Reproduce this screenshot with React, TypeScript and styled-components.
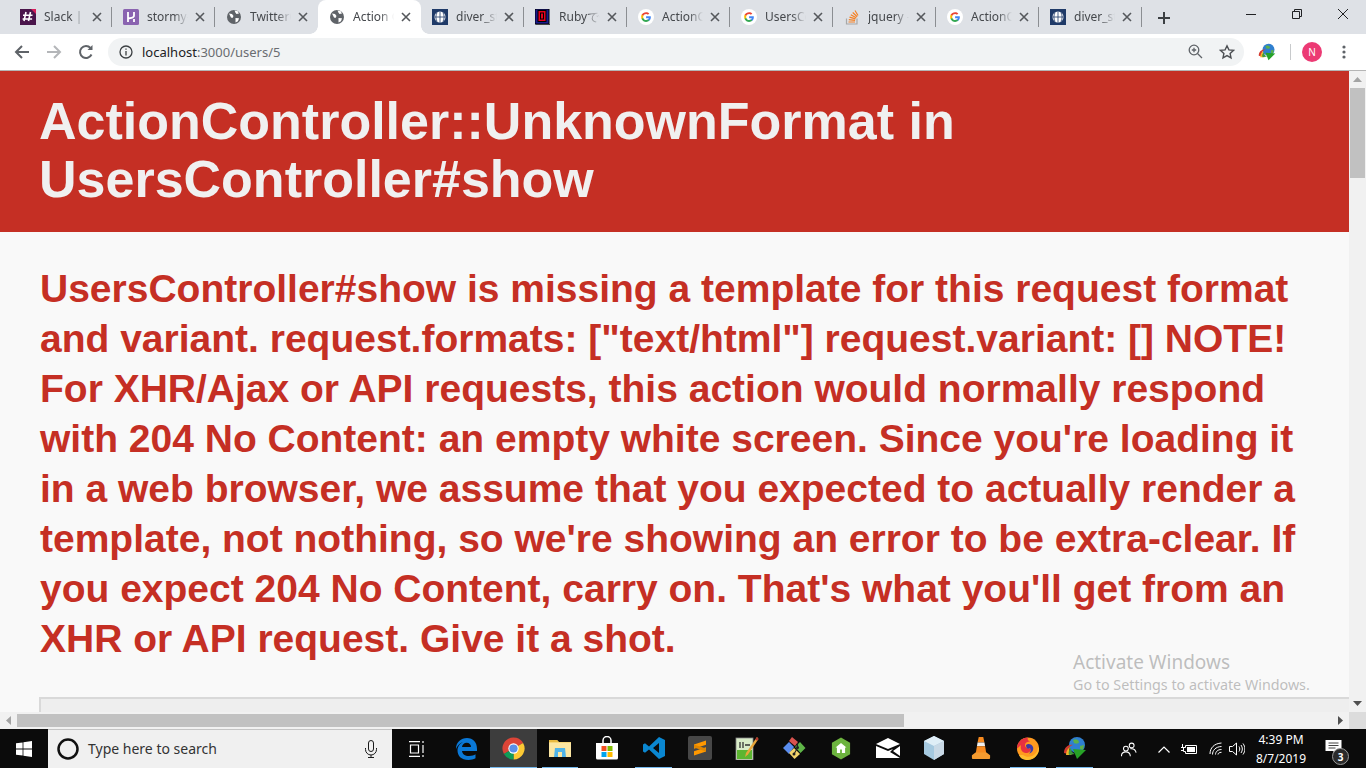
import React from "react";
import styled, { createGlobalStyle } from "styled-components";

const GlobalStyle = createGlobalStyle`
  html, body {
    margin: 0;
    padding: 0;
    width: 1366px;
    height: 768px;
    overflow: hidden;
    background: #fff;
  }
  * { box-sizing: border-box; }
`;

const UI_FONT = `"Noto Sans", "Open Sans", "Liberation Sans", sans-serif`;

const Screen = styled.div`
  position: relative;
  display: flex;
  flex-direction: column;
  width: 1366px;
  height: 768px;
  font-family: "Liberation Sans", Arial, sans-serif;
`;

/* ---- browser chrome ---- */

const TabStrip = styled.div`
  display: flex;
  align-items: flex-end;
  height: 34px;
  padding-left: 9px;
  background: #dee1e6;
  flex: none;
`;

const Tab = styled.div<{ $active?: boolean; $sep?: boolean }>`
  position: relative;
  display: flex;
  align-items: center;
  width: 103px;
  height: 34px;
  padding-left: 11px;
  flex: none;
  background: ${(p) => (p.$active ? "#fff" : "transparent")};
  border-radius: 8px 8px 0 0;

  ${(p) =>
    p.$sep &&
    `&::after {
      content: "";
      position: absolute;
      right: 0;
      top: 7px;
      width: 1px;
      height: 20px;
      background: #8b8e92;
    }`}

  ${(p) =>
    p.$active &&
    `&::before {
      content: "";
      position: absolute;
      left: -8px;
      right: -8px;
      bottom: 0;
      height: 8px;
      background:
        radial-gradient(circle at 0 0, #dee1e6 7.5px, #fff 8px) left bottom / 8px 8px no-repeat,
        radial-gradient(circle at 100% 0, #dee1e6 7.5px, #fff 8px) right bottom / 8px 8px no-repeat;
    }`}
`;

const Favicon = styled.span`
  display: flex;
  width: 16px;
  height: 16px;
  flex: none;
`;

const TabTitle = styled.span`
  width: 41px;
  margin-left: 8px;
  font: 12px/16px ${UI_FONT};
  color: #45484c;
  white-space: nowrap;
  overflow: hidden;
  -webkit-mask-image: linear-gradient(90deg, #000 65%, transparent 100%);
  mask-image: linear-gradient(90deg, #000 65%, transparent 100%);
`;

const TabClose = styled.span`
  display: flex;
  margin-left: 7px;
  color: #55585c;
`;

const NewTab = styled.span`
  display: flex;
  margin: 0 0 9px 15px;
  align-self: flex-end;
  color: #3c4043;
`;

const WindowControls = styled.div`
  display: flex;
  margin-left: auto;
  align-self: flex-start;
  color: #202124;
`;

const WindowButton = styled.span`
  display: flex;
  align-items: center;
  justify-content: center;
  width: 46px;
  height: 28px;
`;

const Toolbar = styled.div`
  display: flex;
  align-items: center;
  height: 37px;
  padding: 0 0 1px 6px;
  background: #fff;
  border-bottom: 1px solid #b5b5b5;
  flex: none;
`;

const NavButton = styled.span<{ $muted?: boolean }>`
  display: flex;
  justify-content: center;
  width: 32px;
  color: ${(p) => (p.$muted ? "#b4b6b9" : "#5f6368")};
`;

const AddressBar = styled.div`
  display: flex;
  align-items: center;
  width: 1136px;
  height: 28px;
  margin-left: 6px;
  padding: 0 9px 0 11px;
  background: #f1f3f4;
  border-radius: 14px;
  color: #5f6368;
`;

const Url = styled.span`
  margin-left: 9px;
  font: 13px/18px ${UI_FONT};
  color: #6a6d71;
`;

const UrlHost = styled.span`
  color: #202124;
`;

const AddressActions = styled.div`
  display: flex;
  align-items: center;
  gap: 16px;
  margin-left: auto;
`;

const ExtensionSlot = styled.span`
  display: flex;
  margin-left: 14px;
`;

const ToolbarDivider = styled.span`
  width: 1px;
  height: 16px;
  margin: 0 11px 0 14px;
  background: #c8cacc;
`;

const Avatar = styled.span`
  display: flex;
  align-items: center;
  justify-content: center;
  width: 20px;
  height: 20px;
  border-radius: 50%;
  background: #ec3a74;
  color: #fff;
  font: 10px/1 ${UI_FONT};
`;

const MenuDots = styled.span`
  display: flex;
  margin-left: 20px;
  color: #5f6368;
`;

/* ---- page ---- */

const PageRow = styled.div`
  display: flex;
  height: 641px;
  flex: none;
`;

const Page = styled.main`
  width: 1349px;
  overflow: hidden;
  background: #f9f9f9;
`;

const ErrorHeader = styled.header`
  padding: 21px 39px 24px;
  background: #c52f24;
`;

const ErrorTitle = styled.h1`
  margin: 0;
  font-size: 52px;
  line-height: 58px;
  font-weight: 700;
  color: #f0f0f0;
`;

const ErrorMessage = styled.h2`
  margin: 32px 0 33px;
  padding: 0 39px 0 40px;
  font-size: 39px;
  line-height: 50px;
  font-weight: 700;
  color: #c52f24;
`;

const TraceBox = styled.div`
  height: 60px;
  margin-left: 39px;
  background: #eeeeee;
  border-top: 2px solid #d9d9d9;
  border-left: 2px solid #d9d9d9;
`;

const VerticalBar = styled.div`
  display: flex;
  flex-direction: column;
  align-items: center;
  width: 17px;
  background: #f1f1f1;
`;

const ArrowCell = styled.span`
  display: flex;
  align-items: center;
  justify-content: center;
  width: 17px;
  height: 17px;
  flex: none;
  color: #505050;
`;

const VerticalThumb = styled.div`
  width: 15px;
  height: 90px;
  background: #c1c1c1;
`;

const VerticalSpacer = styled.div`
  flex: 1;
`;

const HorizontalBar = styled.div`
  display: flex;
  align-items: center;
  height: 17px;
  background: #f1f1f1;
  flex: none;
`;

const HorizontalThumb = styled.div`
  width: 887px;
  height: 13px;
  background: #c1c1c1;
`;

const HorizontalTrack = styled.div`
  flex: 1;
`;

const ScrollCorner = styled.div`
  width: 17px;
  height: 17px;
  background: #dcdcdc;
`;

const Watermark = styled.div`
  position: absolute;
  left: 1073px;
  top: 650px;
  font-family: ${UI_FONT};
  color: rgba(130, 130, 130, 0.5);
  pointer-events: none;
`;

const WatermarkTitle = styled.div`
  font-size: 19px;
  line-height: 24px;
`;

const WatermarkText = styled.div`
  font-size: 14.3px;
  line-height: 22px;
`;

/* ---- taskbar ---- */

const Taskbar = styled.footer`
  display: flex;
  align-items: center;
  height: 40px;
  background: #0b0b0b;
  flex: none;
  color: #fff;
`;

const StartButton = styled.span`
  display: flex;
  align-items: center;
  justify-content: center;
  width: 48px;
  height: 40px;
`;

const SearchBox = styled.div`
  display: flex;
  align-items: center;
  width: 344px;
  height: 40px;
  padding: 0 15px 2px 9px;
  background: #f0f0f0;
  border-top: 1px solid #c4c4c4;
  color: #1a1a1a;
`;

const SearchText = styled.span`
  margin-left: 9px;
  font: 14px/20px ${UI_FONT};
  color: #333;
`;

const SearchMic = styled.span`
  display: flex;
  margin-left: auto;
`;

const TaskViewButton = styled.span`
  display: flex;
  align-items: center;
  justify-content: center;
  width: 51px;
  height: 40px;
  padding: 0 2px 1px 0;
`;

const AppButton = styled.span<{ $open?: boolean; $focused?: boolean }>`
  position: relative;
  display: flex;
  align-items: center;
  justify-content: center;
  width: 46.8px;
  height: 40px;
  padding-bottom: 2px;
  flex: none;
  background: ${(p) => (p.$focused ? "#3d3d3d" : "transparent")};

  ${(p) =>
    p.$open &&
    `&::after {
      content: "";
      position: absolute;
      left: ${p.$focused ? "0" : "5px"};
      right: ${p.$focused ? "0" : "5px"};
      bottom: 0;
      height: 2px;
      background: #76b9ed;
    }`}
`;

const Tray = styled.div`
  display: flex;
  align-items: center;
  margin-left: auto;
  height: 40px;
  padding-right: 11px;
`;

const TrayIcon = styled.span<{ $w: number; $gap?: number }>`
  display: flex;
  align-items: center;
  justify-content: center;
  width: ${(p) => p.$w}px;
  margin-left: ${(p) => p.$gap ?? 0}px;
  color: #fff;
`;

const Clock = styled.div`
  width: 60px;
  margin-left: 6px;
  text-align: center;
  font: 12px/19px ${UI_FONT};
  color: #fff;
`;

const NotifyButton = styled.span`
  position: relative;
  display: flex;
  align-items: center;
  justify-content: center;
  width: 44px;
  height: 40px;
  padding-bottom: 4px;
`;

const NotifyBadge = styled.span`
  position: absolute;
  left: 21px;
  top: 19px;
  display: flex;
  align-items: center;
  justify-content: center;
  width: 17px;
  height: 17px;
  border-radius: 50%;
  background: #2b2b2b;
  border: 1px solid #9a9a9a;
  font: 700 10px/1 ${UI_FONT};
  color: #fff;
`;

/* ---- icons ---- */

const Svg = ({ s = 16, h, children }: { s?: number; h?: number; children: React.ReactNode }) => (
  <svg width={s} height={h ?? s} viewBox={`0 0 ${s} ${h ?? s}`} fill="none">
    {children}
  </svg>
);

const SlackIcon = () => (
  <Svg>
    <rect width="16" height="16" fill="#4a154b" />
    <path d="M11 0h5v5z" fill="#d81e5b" />
    <path d="M6 3l-2 9M10.5 3l-2 9M3 6.2h9.5M2.6 10h9.5" stroke="#fff" strokeWidth="1.6" />
  </Svg>
);

const HerokuIcon = () => (
  <Svg>
    <rect width="16" height="16" rx="1.5" fill="#8a63b0" />
    <path d="M5 3v10M11 3v3.5c0 1.5-1 2-2.5 2.3L5 9.5M11 10v3" stroke="#fff" strokeWidth="1.8" />
  </Svg>
);

const GlobeIcon = () => (
  <Svg>
    <circle cx="8" cy="8" r="7" fill="#5f6368" />
    <path d="M3 4.5l3 .5 1.5 2-1 2L5 8.5zM8.5 1.5l3 .5 1.5 2.5-2.5.5-1-1.2zM9.5 9l3.5.3-1 3-2.5 1.2z" fill="#fff" />
  </Svg>
);

const DiverIcon = () => (
  <Svg>
    <rect width="16" height="16" fill="#1f3a68" />
    <circle cx="8" cy="8" r="5.5" fill="#fff" />
    <path d="M2.5 8h11M8 2.5v11M5 3.5c-1.500 3-1.500 6 0 9M11 3.500c1.500 3 1.500 6 0 9" stroke="#1f3a68" strokeWidth=".8" />
  </Svg>
);

const RubyIcon = () => (
  <Svg>
    <rect width="14" height="15" fill="#1a1a8c" stroke="#000" />
    <rect x="3" y="1.500" width="8" height="11" fill="#e8001c" stroke="#000" />
    <rect x="5.500" y="4" width="3" height="6" fill="#e8001c" stroke="#000" />
    <path d="M1 15.500h14" stroke="#444" />
  </Svg>
);

const GoogleIcon = () => (
  <svg width="16" height="16" viewBox="0 0 48 48">
    <circle cx="24" cy="24" r="24" fill="#fff" />
    <path d="M38.500 24.800c0-1-.1-2-.3-2.900H24.300v5.500h8c-.3 1.800-1.400 3.400-3 4.400v3.700h4.800c2.800-2.600 4.400-6.400 4.400-10.700z" fill="#4285f4" />
    <path d="M24.300 39c4 0 7.300-1.300 9.800-3.500l-4.800-3.700c-1.300.9-3 1.400-5 1.400-3.900 0-7.200-2.600-8.300-6.100h-4.900v3.800C13.500 35.800 18.500 39 24.300 39z" fill="#34a853" />
    <path d="M16 26.100c-.6-1.800-.6-3.700 0-5.500v-3.800h-4.900c-2.100 4.100-2.100 9 0 13.100z" fill="#fbbc05" />
    <path d="M24.300 15.100c2.200 0 4.100.8 5.600 2.200l4.200-4.200C31.600 10.700 28.200 9.400 24.300 9.400c-5.800 0-10.800 3.200-13.200 7.400l4.900 3.800c1.100-3.300 4.400-5.500 8.300-5.500z" fill="#ea4335" />
  </svg>
);

const StackIcon = () => (
  <Svg>
    <path d="M2.500 9.500v5.500h10.500V9.500" stroke="#a8a8a8" strokeWidth="1.200" />
    <path d="M4.500 13h6.500M4.800 10.700l6.300.7M5.500 8.200l6 1.700M6.800 5.700l5.400 3M8.700 3.500l4.500 4.200M11 1.500l3 5" stroke="#f48024" strokeWidth="1.200" />
  </Svg>
);

const CloseGlyph = () => (
  <svg width="10" height="10" viewBox="0 0 10 10">
    <path d="M1 1l8 8M9 1l-8 8" stroke="currentColor" strokeWidth="1.600" />
  </svg>
);

const IdmIcon = ({ size = 18 }: { size?: number }) => (
  <svg width={size} height={size} viewBox="0 0 24 24">
    <circle cx="14" cy="9" r="8" fill="#2f7fd0" />
    <path d="M10 4c3-2 6 0 6 2s-4 2-5 1zM17 10l4-1-1 5-3-1z" fill="#5db04a" />
    <path d="M1 17C1 11 6 8 10 9 6 10 4 13 5 18z" fill="#d43a2f" />
    <path d="M3 19c0-4 2-7 4-8-1 3-1 6 2 8z" fill="#f0b429" />
    <path d="M6 19c-1-3 0-5 2-7 0 3 1 5 4 6z" fill="#3d9a3d" />
    <path d="M10 13l13 1-9 9z" fill="#27a327" />
  </svg>
);

const StartIcon = () => (
  <svg width="16" height="16" viewBox="0 0 16 16" fill="#fff">
    <path d="M0 2.300l6.600-.9v6.200H0zM7.400 1.300L16 0v7.600H7.400zM0 8.400h6.600v6.200L0 13.700zM7.400 8.400H16V16l-8.600-1.200z" />
  </svg>
);

const ChromeIcon = () => (
  <svg width="23" height="23" viewBox="0 0 24 24">
    <path d="M12 12L22 6.250A11.500 11.500 0 0 0 2 17.750z" fill="#db4437" />
    <path d="M12 12L12 23.500A11.500 11.500 0 0 0 22 6.250z" fill="#fcc934" />
    <path d="M12 12L2 17.750A11.500 11.500 0 0 0 12 23.500z" fill="#0f9d58" />
    <circle cx="12" cy="12" r="5.400" fill="#fff" />
    <circle cx="12" cy="12" r="4.300" fill="#5a8fe8" />
  </svg>
);

const EdgeIcon = () => (
  <svg width="24" height="24" viewBox="0 0 24 24">
    <path d="M2 13C2 6 7 2 13 2c6 0 10 4 10 11v2H8c.3 3 3 5 7 5 3 0 5-.8 6.500-1.700v4C19.500 23.400 17 24 14.500 24 7 24 3.500 19.500 3.500 14.500 3.500 10.500 6 7.500 9 6 6 7 3.500 9.500 2 13zm6-2h9c0-2.500-1.800-4.300-4.300-4.300C10.200 6.700 8.300 8.500 8 11z" fill="#0a78d7" />
  </svg>
);

const ExplorerIcon = () => (
  <svg width="22" height="20" viewBox="0 0 22 20">
    <path d="M0 2h8l2 2h12v15H0z" fill="#f6d67a" />
    <path d="M0 2h8l1.500 2H0z" fill="#e8b93f" />
    <path d="M0 5h22v14H0z" fill="#fbe6a2" />
    <path d="M6 10h10l1 9H5z" fill="#4fb3e8" />
    <rect x="9" y="14" width="4" height="5" fill="#fbe6a2" />
  </svg>
);

const StoreIcon = () => (
  <svg width="24" height="24" viewBox="0 0 24 24">
    <path d="M8 7V4.500a4 4 0 0 1 8 0V7" stroke="#fff" strokeWidth="1.500" fill="none" />
    <path d="M1 7h22v15a1.500 1.500 0 0 1-1.500 1.500h-19A1.500 1.500 0 0 1 1 22z" fill="#fff" />
    <rect x="6.500" y="10" width="5" height="5" fill="#f25022" />
    <rect x="12.500" y="10" width="5" height="5" fill="#7fba00" />
    <rect x="6.500" y="16" width="5" height="5" fill="#00a4ef" />
    <rect x="12.500" y="16" width="5" height="5" fill="#ffb900" />
  </svg>
);

const VsCodeIcon = () => (
  <svg width="24" height="24" viewBox="0 0 24 24">
    <path d="M17 1l6 3v16l-6 3L7 13.500l-4 3.200-2-1.200v-7l2-1.200 4 3.200zM17 7l-6 5 6 5z" fill="#0a87d1" />
  </svg>
);

const SublimeIcon = () => (
  <svg width="24" height="24" viewBox="0 0 24 24">
    <rect width="24" height="24" rx="2" fill="#474747" />
    <path d="M18 4.500v4.300L6 12.800V8.500zM18 11.200v4.300L6 19.500v-4.300z" fill="#ff9800" />
    <path d="M6 8.500l12 4v3L6 11.500z" fill="#e08600" />
  </svg>
);

const NotepadIcon = () => (
  <svg width="24" height="24" viewBox="0 0 24 24">
    <rect x="1" y="2" width="17" height="22" fill="#d9ecc8" stroke="#888" strokeWidth=".8" />
    <rect x="2" y="14" width="15" height="9" fill="#5cb531" />
    <path d="M5 6v6M8 6v6M10 9h5" stroke="#333" strokeWidth="1.300" />
    <path d="M22 1L11 17l-1 4 3-2.500L23.500 3z" fill="#e8a63a" />
    <path d="M22 1l1.500 2-1.500 1.700-1.800-1.200z" fill="#b5342d" />
  </svg>
);

const GitAppIcon = () => (
  <svg width="24" height="24" viewBox="0 0 24 24">
    <path d="M1 12l6-6 5 5-5 7z" fill="#5b8def" />
    <path d="M7 5l3-4 6 5-3 4z" fill="#d9534f" />
    <path d="M13 11l5-5 5.500 6-5 5z" fill="#5fb548" />
    <path d="M7 17l5-5 6 6-5.500 5z" fill="#f3d46b" />
    <circle cx="15.500" cy="11.500" r="1.500" fill="#222" />
    <circle cx="12" cy="18" r="1.500" fill="#222" />
    <path d="M15.500 7v5M15.500 12L12 18" stroke="#222" strokeWidth="1.100" />
  </svg>
);

const NodeIcon = () => (
  <svg width="20" height="23" viewBox="0 0 22 24">
    <path d="M11 0l10 5.800v12.400L11 24 1 18.200V5.800z" fill="#6cb33e" />
    <path d="M11 6l-6 5h1.500v6h3.500v-4h2v4h3.500v-6H17z" fill="#fff" />
  </svg>
);

const MailIcon = () => (
  <svg width="24" height="20" viewBox="0 0 24 20">
    <path d="M0 6L12 0l12 6-12 5z" fill="#fff" />
    <path d="M0 8l12 5 5-2-3 3 10 6H0z" fill="#fff" />
    <path d="M24 8v10L17 13z" fill="#fff" />
  </svg>
);

const BoxIcon = () => (
  <svg width="22" height="24" viewBox="0 0 22 24">
    <path d="M11 0l10 5v13l-10 6-10-6V5z" fill="#a5c9e0" />
    <path d="M1 5l10 5 10-5-10-5z" fill="#dfeef7" />
    <path d="M11 10v14l10-6V5z" fill="#c9d9e6" />
  </svg>
);

const VlcIcon = () => (
  <svg width="20" height="22" viewBox="0 0 22 24">
    <path d="M8.500 0h5l1.300 6H7.200z" fill="#f78a1f" />
    <path d="M7.200 6h7.600l.7 4h-9z" fill="#f0f0f0" />
    <path d="M6.500 10h9l1.300 8H5.200z" fill="#f78a1f" />
    <path d="M1 20l4-3h12l4 3v3a1 1 0 0 1-1 1H2a1 1 0 0 1-1-1z" fill="#f59b2f" />
  </svg>
);

const FirefoxIcon = () => (
  <svg width="24" height="24" viewBox="0 0 24 24">
    <circle cx="12" cy="12.500" r="11" fill="#ff9a1f" />
    <path d="M1 12.500C1 6 6.500 1.500 12 1.500c-1 2 0 3 2 4-3 0-5 1.500-5 3.500 0 3 3 4 6 3 0 3-2 5-5 5-4 0-6-4-5-8-2 2-3 3-4 3.500z" fill="#e8313f" />
    <path d="M7 19c4 3 10 2 13-2 1.500-2 2-4 2-6l1 1.500c0 6-5 11.500-11 11.500-5 0-8-2-9-5z" fill="#ffbd2e" />
    <path d="M10 9c2-2 6-1 7 2s-1 6-4 6.500c2-1.500 2-4 1-5.500-2 1.500-4 .5-4-3z" fill="#3d3ba8" />
  </svg>
);

const PeopleIcon = () => (
  <svg width="16" height="15" viewBox="0 0 18 16" fill="none" stroke="currentColor" strokeWidth="1.200">
    <circle cx="5.500" cy="7" r="2.700" />
    <path d="M.5 15.500c0-3 2-4.800 5-4.800s4.800 1.800 5 4.800" />
    <circle cx="12" cy="3.500" r="2.700" />
    <path d="M10.500 7.200c3-.5 5.800 1 6.500 4.300" />
  </svg>
);

const App = () => {
  const tabs: { title: string; icon: React.ReactNode }[] = [
    { title: "Slack | Ubuntu", icon: <SlackIcon /> },
    { title: "stormy-fjord", icon: <HerokuIcon /> },
    { title: "TwitterOAuth", icon: <GlobeIcon /> },
    { title: "Action Controller", icon: <GlobeIcon /> },
    { title: "diver_study", icon: <DiverIcon /> },
    { title: "Rubyで作る", icon: <RubyIcon /> },
    { title: "ActionController", icon: <GoogleIcon /> },
    { title: "UsersController", icon: <GoogleIcon /> },
    { title: "jquery - how", icon: <StackIcon /> },
    { title: "ActionController", icon: <GoogleIcon /> },
    { title: "diver_study", icon: <DiverIcon /> },
  ];
  const activeTab = 3;

  const apps: { icon: React.ReactNode; open?: boolean; focused?: boolean }[] = [
    { icon: <EdgeIcon /> },
    { icon: <ChromeIcon />, open: true, focused: true },
    { icon: <ExplorerIcon />, open: true },
    { icon: <StoreIcon /> },
    { icon: <VsCodeIcon />, open: true },
    { icon: <SublimeIcon /> },
    { icon: <NotepadIcon /> },
    { icon: <GitAppIcon /> },
    { icon: <NodeIcon /> },
    { icon: <MailIcon /> },
    { icon: <BoxIcon /> },
    { icon: <VlcIcon /> },
    { icon: <FirefoxIcon />, open: true },
    { icon: <IdmIcon size={24} />, open: true },
  ];

  return (
    <Screen>
      <GlobalStyle />
      <TabStrip>
        {tabs.map((tab, i) => (
          <Tab key={i} $active={i === activeTab} $sep={i !== activeTab && i !== activeTab - 1}>
            <Favicon>{tab.icon}</Favicon>
            <TabTitle>{tab.title}</TabTitle>
            <TabClose>
              <CloseGlyph />
            </TabClose>
          </Tab>
        ))}
        <NewTab>
          <svg width="14" height="14" viewBox="0 0 14 14">
            <path d="M7 1v12M1 7h12" stroke="currentColor" strokeWidth="2" />
          </svg>
        </NewTab>
        <WindowControls>
          <WindowButton>
            <svg width="10" height="10" viewBox="0 0 10 10">
              <path d="M0 5.500h10" stroke="currentColor" />
            </svg>
          </WindowButton>
          <WindowButton>
            <svg width="10" height="10" viewBox="0 0 10 10" fill="none" stroke="currentColor">
              <path d="M.5 2.500h7v7h-7zM2.500 2.500v-2h7v7h-2" />
            </svg>
          </WindowButton>
          <WindowButton>
            <svg width="10" height="10" viewBox="0 0 10 10">
              <path d="M0 0l10 10M10 0L0 10" stroke="currentColor" />
            </svg>
          </WindowButton>
        </WindowControls>
      </TabStrip>

      <Toolbar>
        <NavButton>
          <svg width="16" height="16" viewBox="0 0 16 16" fill="none" stroke="currentColor" strokeWidth="2">
            <path d="M15 8H2M8 2L2 8l6 6" />
          </svg>
        </NavButton>
        <NavButton $muted>
          <svg width="16" height="16" viewBox="0 0 16 16" fill="none" stroke="currentColor" strokeWidth="2">
            <path d="M1 8h13M8 2l6 6-6 6" />
          </svg>
        </NavButton>
        <NavButton>
          <svg width="16" height="16" viewBox="0 0 16 16" fill="none" stroke="currentColor" strokeWidth="2">
            <path d="M13.500 10.500A6 6 0 1 1 12.500 4" />
            <path d="M14.500 1v5h-5z" fill="currentColor" stroke="none" />
          </svg>
        </NavButton>
        <AddressBar>
          <svg width="14" height="14" viewBox="0 0 14 14" fill="none" stroke="#3c4043" strokeWidth="1.300">
            <circle cx="7" cy="7" r="6" />
            <path d="M7 6v4.500M7 3.500v1.300" />
          </svg>
          <Url>
            <UrlHost>localhost</UrlHost>:3000/users/5
          </Url>
          <AddressActions>
            <svg width="15" height="15" viewBox="0 0 15 15" fill="none" stroke="currentColor" strokeWidth="1.300">
              <circle cx="6" cy="6" r="4.800" />
              <path d="M9.500 9.500L14 14M6 3.800v4.400M3.800 6h4.400" />
            </svg>
            <svg width="16" height="16" viewBox="0 0 16 16" fill="none" stroke="#4c4f53" strokeWidth="1.400">
              <path d="M8 1.800l1.900 4.100 4.500.5-3.300 3 .9 4.400L8 11.600l-4 2.200.9-4.400-3.300-3 4.500-.5z" />
            </svg>
          </AddressActions>
        </AddressBar>
        <ExtensionSlot>
          <IdmIcon />
        </ExtensionSlot>
        <ToolbarDivider />
        <Avatar>N</Avatar>
        <MenuDots>
          <svg width="4" height="14" viewBox="0 0 4 14" fill="currentColor">
            <circle cx="2" cy="2" r="1.600" />
            <circle cx="2" cy="7" r="1.600" />
            <circle cx="2" cy="12" r="1.600" />
          </svg>
        </MenuDots>
      </Toolbar>

      <PageRow>
        <Page>
          <ErrorHeader>
            <ErrorTitle>ActionController::UnknownFormat in UsersController#show</ErrorTitle>
          </ErrorHeader>
          <ErrorMessage>
            UsersController#show is missing a template for this request format and variant.
            request.formats: ["text/html"] request.variant: [] NOTE! For XHR/Ajax or API requests,
            this action would normally respond with 204 No Content: an empty white screen. Since
            you're loading it in a web browser, we assume that you expected to actually render a
            template, not nothing, so we're showing an error to be extra-clear. If you expect 204
            No Content, carry on. That's what you'll get from an XHR or API request. Give it a shot.
          </ErrorMessage>
          <TraceBox />
        </Page>
        <VerticalBar>
          <ArrowCell>
            <svg width="9" height="5" viewBox="0 0 9 5" fill="#a3a3a3">
              <path d="M4.500 0L9 5H0z" />
            </svg>
          </ArrowCell>
          <VerticalThumb />
          <VerticalSpacer />
          <ArrowCell>
            <svg width="9" height="5" viewBox="0 0 9 5" fill="currentColor">
              <path d="M0 0h9L4.500 5z" />
            </svg>
          </ArrowCell>
        </VerticalBar>
      </PageRow>
      <HorizontalBar>
        <ArrowCell>
          <svg width="5" height="9" viewBox="0 0 5 9" fill="#a3a3a3">
            <path d="M5 0v9L0 4.500z" />
          </svg>
        </ArrowCell>
        <HorizontalThumb />
        <HorizontalTrack />
        <ArrowCell>
          <svg width="5" height="9" viewBox="0 0 5 9" fill="currentColor">
            <path d="M0 0l5 4.500L0 9z" />
          </svg>
        </ArrowCell>
        <ScrollCorner />
      </HorizontalBar>

      <Taskbar>
        <StartButton>
          <StartIcon />
        </StartButton>
        <SearchBox>
          <svg width="22" height="22" viewBox="0 0 22 22" fill="none" stroke="#111" strokeWidth="2.500">
            <circle cx="11" cy="11" r="9.500" />
          </svg>
          <SearchText>Type here to search</SearchText>
          <SearchMic>
            <svg width="12" height="18" viewBox="0 0 12 18" fill="none" stroke="currentColor">
              <rect x="3.500" y=".5" width="5" height="11" rx="2.500" />
              <path d="M.5 8v1.500a5.500 5.500 0 0 0 11 0V8M6 15v2.500M3 17.500h6" />
            </svg>
          </SearchMic>
        </SearchBox>
        <TaskViewButton>
          <svg width="16" height="16" viewBox="0 0 16 16" fill="none" stroke="currentColor" strokeWidth="1.200">
            <path d="M0 .6h11M0 15.400h11M1.500 4h8v8h-8zM14 0v2M14 4v8M14 14v2" />
          </svg>
        </TaskViewButton>
        {apps.map((app, i) => (
          <AppButton key={i} $open={app.open} $focused={app.focused}>
            {app.icon}
          </AppButton>
        ))}
        <Tray>
          <TrayIcon $w={26}>
            <PeopleIcon />
          </TrayIcon>
          <TrayIcon $w={24} $gap={10}>
            <svg width="12" height="7" viewBox="0 0 12 7" fill="none" stroke="currentColor" strokeWidth="1.200">
              <path d="M.5 6.500L6 1l5.500 5.500" />
            </svg>
          </TrayIcon>
          <TrayIcon $w={24} $gap={1}>
            <svg width="16" height="12" viewBox="0 0 16 12" fill="none" stroke="currentColor">
              <path d="M4.500 2.500H15.500v8H4.500v-2h-2v-4h2z" />
              <rect x="6" y="4" width="8" height="5" fill="currentColor" stroke="none" />
              <path d="M0 4.500h3M0 7.500h3M1.500 1v3" />
            </svg>
          </TrayIcon>
          <TrayIcon $w={26} $gap={2}>
            <svg width="14" height="14" viewBox="0 0 14 14" fill="none" stroke="currentColor">
              <path d="M1 12C1 6 5 1.500 12.500 1M3.500 12.500c0-4 3-7.800 9-8M6.500 12.500c0-2.500 2-5 6-5M9 12.500c0-1 1-2.200 3.500-2.200" />
            </svg>
          </TrayIcon>
          <TrayIcon $w={16}>
            <svg width="16" height="14" viewBox="0 0 16 14" fill="none" stroke="currentColor">
              <path d="M.5 4.500h3L7.500 1v12l-4-3.500h-3zM10 4.500c1 1.500 1 3.500 0 5M12 3c1.800 2.500 1.800 5.500 0 8M14 1.500c2.500 3.500 2.500 7.500 0 11" />
            </svg>
          </TrayIcon>
          <Clock>
            <div>4:39 PM</div>
            <div>8/7/2019</div>
          </Clock>
          <NotifyButton>
            <svg width="17" height="14" viewBox="0 0 16 14" fill="#fff">
              <path d="M0 0h16v11h-5l-3 3v-3H0z" />
              <path d="M3 3h10M3 5.500h10M3 8h7" stroke="#444" strokeWidth="1" />
            </svg>
            <NotifyBadge>3</NotifyBadge>
          </NotifyButton>
        </Tray>
      </Taskbar>

      <Watermark>
        <WatermarkTitle>Activate Windows</WatermarkTitle>
        <WatermarkText>Go to Settings to activate Windows.</WatermarkText>
      </Watermark>
    </Screen>
  );
};

export default App;
